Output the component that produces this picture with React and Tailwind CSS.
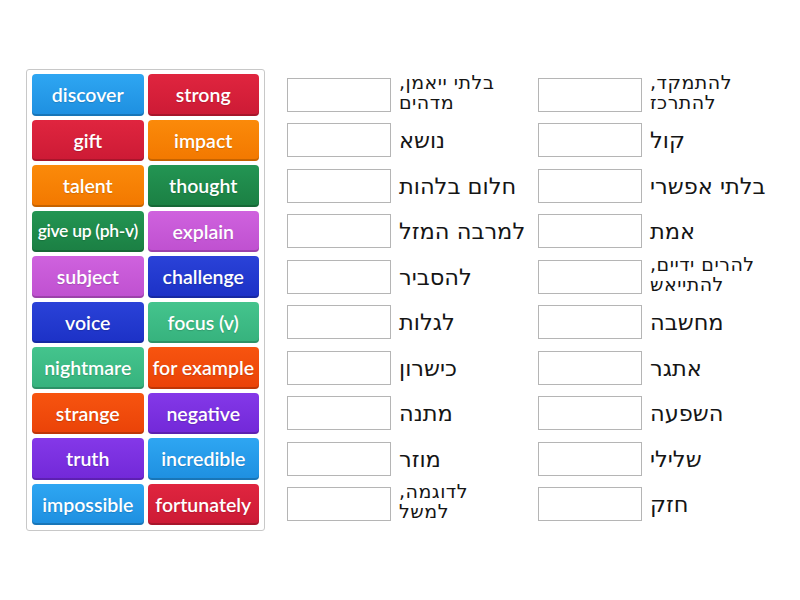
import React from 'react';

// tile colours, each class string written out in full
const colors = {
  blue: 'bg-linear-to-b from-[#2ea6f2] to-[#1e8fe0]',
  red: 'bg-linear-to-b from-[#e0253f] to-[#cc1a35]',
  orange: 'bg-linear-to-b from-[#fb8a0a] to-[#f27800]',
  green: 'bg-linear-to-b from-[#239553] to-[#1b7f43]',
  pink: 'bg-linear-to-b from-[#cf62de] to-[#bf50d0]',
  navy: 'bg-linear-to-b from-[#2a42d8] to-[#1c31c6]',
  mint: 'bg-linear-to-b from-[#44c48d] to-[#36b27d]',
  flame: 'bg-linear-to-b from-[#f7540f] to-[#ea4208]',
  purple: 'bg-linear-to-b from-[#8438e8] to-[#7228d8]',
};

const tiles = [
  ['discover', 'blue'], ['strong', 'red'],
  ['gift', 'red'], ['impact', 'orange'],
  ['talent', 'orange'], ['thought', 'green'],
  ['give up (ph-v)', 'green', true], ['explain', 'pink'],
  ['subject', 'pink'], ['challenge', 'navy'],
  ['voice', 'navy'], ['focus (v)', 'mint'],
  ['nightmare', 'mint'], ['for example', 'flame'],
  ['strange', 'flame'], ['negative', 'purple'],
  ['truth', 'purple'], ['incredible', 'blue'],
  ['impossible', 'blue'], ['fortunately', 'red'],
];

const left = [
  ['בלתי ייאמן,', 'מדהים'],
  ['נושא'],
  ['חלום בלהות'],
  ['למרבה המזל'],
  ['להסביר'],
  ['לגלות'],
  ['כישרון'],
  ['מתנה'],
  ['מוזר'],
  ['לדוגמה,', 'למשל'],
];

const right = [
  ['להתמקד,', 'להתרכז'],
  ['קול'],
  ['בלתי אפשרי'],
  ['אמת'],
  ['להרים ידיים,', 'להתייאש'],
  ['מחשבה'],
  ['אתגר'],
  ['השפעה'],
  ['שלילי'],
  ['חזק'],
];

function Tile({ word, color, small }) {
  return (
    <div
      className={`${colors[color]} h-[41.5px] rounded-[4px] flex items-center justify-center text-white whitespace-nowrap font-['Lato',sans-serif] font-semibold shadow-[inset_0_-2px_0_rgba(0,0,0,0.18)] [text-shadow:0_1px_1px_rgba(0,0,0,0.15)] ${small ? 'text-[17.5px] tracking-[-0.3px]' : 'text-[19.5px]'}`}
    >
      {word}
    </div>
  );
}

function Slot({ lines }) {
  const two = lines.length > 1;
  return (
    <div className="h-[45.5px] flex items-center">
      <div className="w-[104px] h-[34px] border border-[#b5b5b5] bg-white shrink-0" />
      <div
        dir="rtl"
        className={`ml-[8px] text-left text-[#151515] font-['DejaVu_Sans',sans-serif] ${two ? 'text-[19px] leading-[20px] tracking-[0.5px] -mt-[6px]' : 'text-[22.5px] leading-[26px]'}`}
      >
        {lines.map((l, i) => (
          <div key={i}>{l}</div>
        ))}
      </div>
    </div>
  );
}

export default function App() {
  return (
    <div className="w-[800px] h-[600px] bg-white flex items-start pt-[69px] pl-[26px]">
      <div className="w-[239px] border border-[#c8c8c8] rounded-[3px] px-[5px] pt-[4px] pb-[5px] grid grid-cols-2 gap-x-[4px] gap-y-[4px]">
        {tiles.map(([w, c, s]) => (
          <Tile key={w} word={w} color={c} small={s} />
        ))}
      </div>

      <div className="ml-[22px] mt-[3px] flex">
        <div className="w-[251px] flex flex-col">
          {left.map((l, i) => (
            <Slot key={i} lines={l} />
          ))}
        </div>
        <div className="w-[251px] flex flex-col">
          {right.map((l, i) => (
            <Slot key={i} lines={l} />
          ))}
        </div>
      </div>
    </div>
  );
}
